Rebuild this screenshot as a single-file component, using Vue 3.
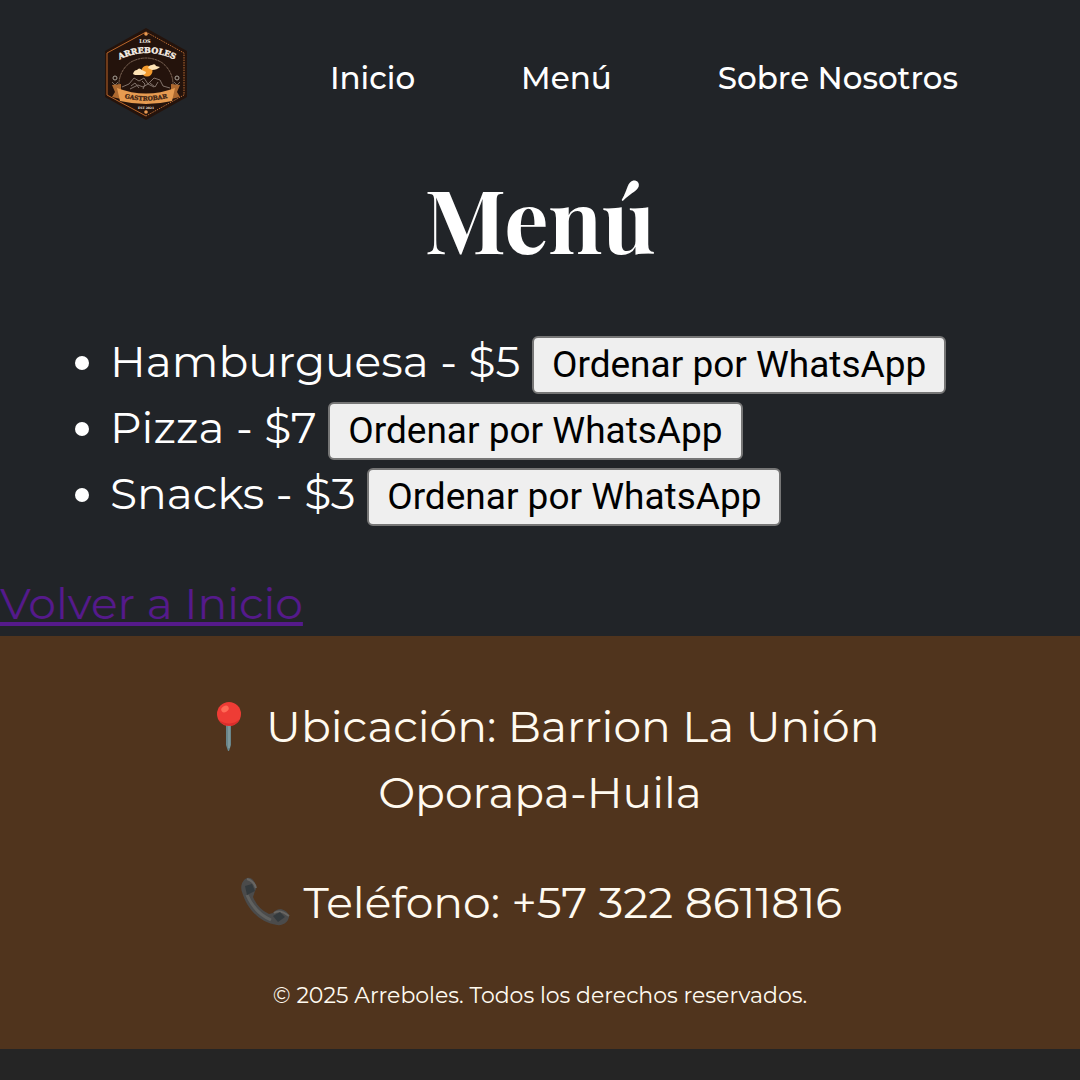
<script setup>
const links = [
  { label: 'Inicio', href: '#inicio' },
  { label: 'Menú', href: '#menu' },
  { label: 'Sobre Nosotros', href: '#nosotros' },
]
const dishes = [
  { name: 'Hamburguesa', price: 5 },
  { name: 'Pizza', price: 7 },
  { name: 'Snacks', price: 3 },
]
</script>

<template>
  <div class="page">
    <header class="header">
      <svg class="logo" viewBox="0 0 84 92" role="img" aria-label="Los Arreboles Gastrobar">
        <defs>
          <path id="name-arc" d="M5 37 Q42 13 79 37" />
          <path id="ribbon-arc" d="M12 68 Q41 77 70 68" />
        </defs>
        <path d="M41 0 82 23V69L41 92 0 69V23Z" fill="#24130c" />
        <path d="M41 4 79 25V67L41 88" fill="none" stroke="#b86a32" stroke-width="1" stroke-dasharray="1.5 1" />
        <path d="M41 4 2 25V67L41 88" fill="none" stroke="#b96529" stroke-width="1" />
        <circle cx="41" cy="6" r="1.8" fill="#e99a52" />
        <circle cx="41" cy="84" r="1.8" fill="#e99a52" />
        <text x="40" y="15" class="logo-small">LOS</text>
        <text class="logo-name"><textPath href="#name-arc" startOffset="50%">ARREBOLES</textPath></text>
        <path d="M14 58A27 27 0 0 1 26 34Q41 26 56 34A27 27 0 0 1 68 58" fill="none" stroke="#927867" stroke-width=".8" stroke-dasharray="3 .5" />
        <circle cx="42" cy="43" r="5.5" fill="#f39a2d" />
        <path d="M28 46q1-4 4-4 2-3 5 0l4 2q0 3-5 3h-6Z M43 40q1-3 4-3 3-2 4 1l4 1q-3 3-8 3Z" fill="#ffe4b5" />
        <path d="m17 59 7-3 5-6 5 3 5-3 4 6 6-6 6 2 3 6 7 2M26 58l4-3 4 5m3-7 3 3-2 5m7-6 5 4 3-5m-28 7 8-4 5 2 5-3 6 3" fill="none" stroke="#81726a" stroke-width="1" />
        <circle cx="10" cy="50" r="2" fill="none" stroke="#aaa39a" />
        <circle cx="72" cy="50" r="2" fill="none" stroke="#aaa39a" />
        <path d="m7 54 3 3 3-3m56 0 3 3 3-3" fill="none" stroke="#776b61" />
        <path d="M7 57 16 56V71L7 69 10 64ZM75 57 66 56V71L75 69 72 64Z" fill="#ad6930" />
        <path d="M12 60Q41 71 70 60L67 73Q41 79 15 73Z" fill="#e69b50" />
        <text class="logo-ribbon"><textPath href="#ribbon-arc" startOffset="50%">GASTROBAR</textPath></text>
        <text x="41" y="81" class="logo-date">EST 2021</text>
      </svg>
      <nav class="nav" aria-label="Principal">
        <a v-for="link in links" :key="link.href" :href="link.href">{{ link.label }}</a>
      </nav>
    </header>

    <main>
      <h1>Menú</h1>
      <ul class="dishes">
        <li v-for="dish in dishes" :key="dish.name">
          {{ dish.name }} - ${{ dish.price }} <button type="button">Ordenar por WhatsApp</button>
        </li>
      </ul>
      <a class="back" href="#inicio">Volver a Inicio</a>
    </main>

    <footer class="footer">
      <p>
        <svg class="emoji" viewBox="0 0 54 54" role="img" aria-label="Ubicación">
          <path d="M25 24h5v22l-2 6h-1l-2-6Z" fill="#69858a" />
          <path d="M28 25v24" stroke="#91a9a9" stroke-width="1" />
          <circle cx="28" cy="15" r="12" fill="#ee3c35" />
          <path d="M18 21a12 12 0 0 0 21-1 16 16 0 0 1-21 1" fill="#d92d2c" />
          <ellipse cx="24" cy="10" rx="4" ry="3" fill="#ff6a56" transform="rotate(-35 24 10)" />
        </svg>
        Ubicación: Barrion La Unión<br>Oporapa-Huila
      </p>
      <p>
        <svg class="emoji" viewBox="0 0 54 54" role="img" aria-label="Teléfono">
          <path d="M9 3C4 5 2 12 4 17 9 34 22 48 39 50 46 51 51 46 51 41Q50 36 43 34 38 34 35 38L31 39Q20 34 15 22L17 16Q19 13 17 8 14 2 9 3Z" fill="#4b4b4b" />
          <path d="M9 4q7 2 9 9M36 38q6-4 15 3" fill="none" stroke="#686663" stroke-width="2" />
          <path d="M9 20q8 18 24 25" fill="none" stroke="#60615f" stroke-width="3" />
          <path d="m7 11 7-2 3 7-8 4ZM35 41l7-4 5 5-7 5Z" fill="#343a3d" />
        </svg>
        Teléfono: +57 322 8611816
      </p>
      <p class="copyright">© 2025 Arreboles. Todos los derechos reservados.</p>
    </footer>
  </div>
</template>

<style>
body {
  margin: 0;
  background: #252525;
}
</style>

<style scoped>
.page {
  background: #212428;
  color: #fff;
  font: 400 44px/66px Montserrat, Inter, sans-serif;
}
.header {
  display: flex;
  align-items: center;
  justify-content: space-between;
  padding: 28px 122px 28px 105px;
}
.logo {
  width: 84px;
  height: 92px;
}
.logo text {
  font-family: "DejaVu Serif", serif;
  font-weight: 700;
  text-anchor: middle;
  fill: #f6eee5;
}
.logo .logo-small {
  font-size: 5px;
}
.logo .logo-name {
  font-size: 8px;
  stroke: #f6eee5;
  stroke-width: 0.4px;
}
.logo .logo-ribbon {
  font-size: 6px;
  fill: #402313;
  stroke: #402313;
  stroke-width: 0.3px;
}
.logo .logo-date {
  font-size: 3px;
}
.nav {
  display: flex;
  gap: 106px;
  padding-top: 8px;
  font-size: 31px;
  font-weight: 500;
  line-height: 48px;
}
.nav a {
  color: inherit;
  text-decoration: none;
}
h1 {
  margin: 13px 0 53px;
  font: 700 88px/114px "Playfair Display", "Liberation Serif", serif;
  text-align: center;
}
.dishes {
  margin: 0 0 44px;
  padding-left: 110px;
}
button {
  box-sizing: border-box;
  height: 58px;
  padding: 0 18px;
  border: 2px solid #767676;
  border-radius: 6px;
  background: #efefef;
  color: #000;
  font: 400 37px/54px Roboto, sans-serif;
}
.back {
  display: block;
  width: fit-content;
  color: #551a8b;
}
.footer {
  padding: 57px 44px 36px;
  background: #50341d;
  color: #fffaf0;
  text-align: center;
}
.footer p {
  margin: 0 0 44px;
}
.emoji {
  width: 54px;
  height: 54px;
  vertical-align: -11px;
}
.footer .copyright {
  margin: 0;
  font-size: 22px;
  line-height: 34px;
}
</style>
